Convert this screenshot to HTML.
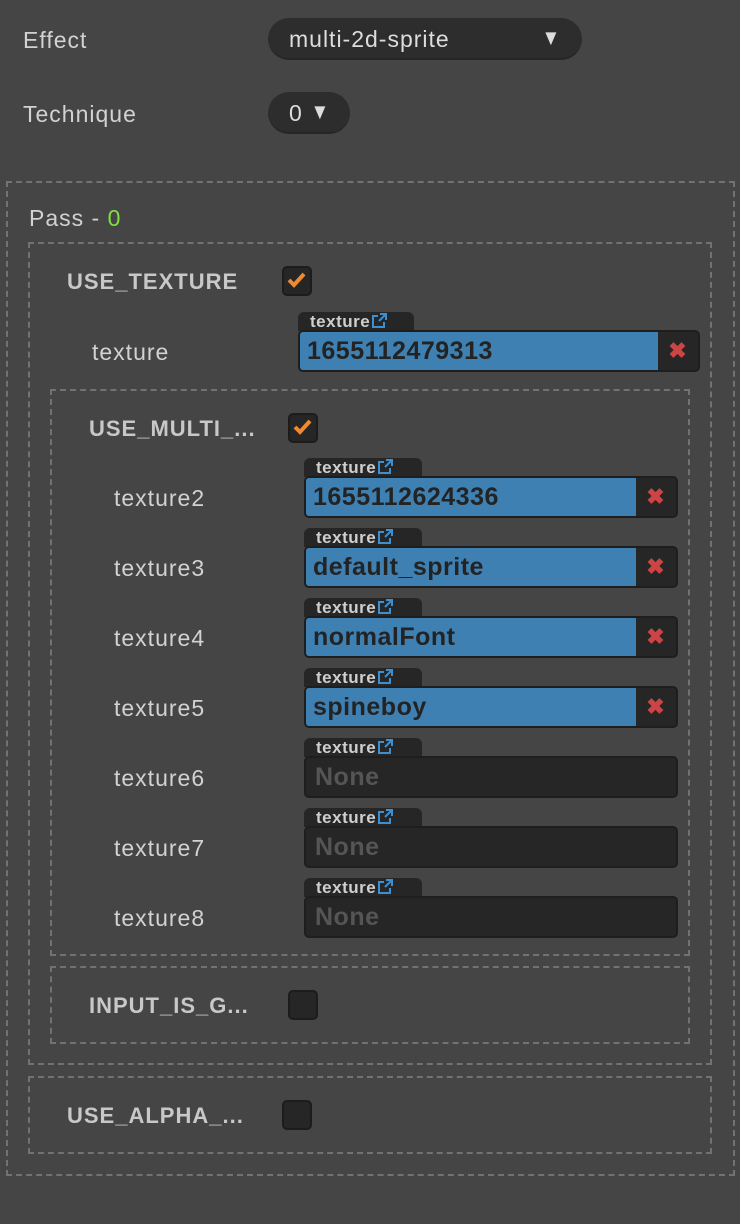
<!DOCTYPE html>
<html><head><style>
body{margin:0;width:740px;height:1224px;background:#454545;font-family:"Liberation Sans",sans-serif;color:#d2d2d2;position:relative;overflow:hidden}
.a{position:absolute}
.lbl{font-size:23px;line-height:26px;letter-spacing:1px}
.b{font-weight:bold;font-size:22px;letter-spacing:1px;color:#c8c8c8}
.sel{background:#2d2d2d;border-radius:21px;border-bottom:2px solid #262626;box-sizing:border-box}
.dash{border:2px dashed #727272;box-sizing:border-box}
.cb{width:30px;height:30px;background:#262626;border:2px solid #1c1c1c;border-radius:5px;box-sizing:border-box}
.tab{background:#262626;border-radius:6px 6px 0 0;height:19px;font-weight:bold;font-size:17px;letter-spacing:0.5px;color:#cfcfcf;padding-left:12px;box-sizing:border-box;line-height:19px}
.fld{background:#262626;border:2px solid #1e1e1e;border-radius:5px;box-sizing:border-box;height:42px;overflow:hidden}
.fld .v{position:absolute;left:0;top:0;bottom:0;background:#3f80b3;font-weight:bold;font-size:25px;letter-spacing:0.5px;color:#232323;padding-left:7px;line-height:38px;box-sizing:border-box}
.fld .x{position:absolute;right:0;top:0;width:41px;bottom:0;color:#c44;font-size:22px;text-align:center;line-height:38px;font-weight:bold}
.none{color:#555;font-weight:bold;font-size:25px;letter-spacing:0.5px;padding-left:9px;line-height:38px}
.arr{font-size:22px;color:#ddd;transform:scaleX(0.85)}
</style></head><body>
<div class="a lbl" style="left:23px;top:27px">Effect</div>
<div class="a sel" style="left:268px;top:18px;width:314px;height:42px"><span class="a lbl" style="left:21px;top:8px;color:#ddd">multi-2d-sprite</span><span class="a arr" style="left:272px;top:7px">▼</span></div>
<div class="a lbl" style="left:23px;top:101px">Technique</div>
<div class="a sel" style="left:268px;top:92px;width:82px;height:42px"><span class="a lbl" style="left:21px;top:8px;color:#ddd">0</span><span class="a arr" style="left:41px;top:7px">▼</span></div>

<div class="a dash" style="left:6px;top:181px;width:729px;height:995px"></div>
<div class="a lbl" style="left:29px;top:205px">Pass - <span style="color:#7fe040">0</span></div>
<div class="a dash" style="left:28px;top:242px;width:684px;height:823px"></div>
<div class="a b" style="left:67px;top:269px">USE_TEXTURE</div>
<div class="a cb" style="left:282px;top:266px"><svg width="26" height="26" class="a" style="left:0;top:0"><path d="M5 12l5 5 10-11" stroke="#f08a30" stroke-width="4" fill="none"/></svg></div>
<div class="a lbl" style="left:92px;top:339px">texture</div>
<div class="a tab" style="left:298px;top:312px;width:116px">texture <svg width="16" height="16" style="vertical-align:-2px;margin-left:-4px"><path d="M7 3H2v11h11V9M8 8l7-7M9 1h6v6" stroke="#3d8fd0" stroke-width="2" fill="none"/></svg></div>
<div class="a fld" style="left:298px;top:330px;width:402px"><div class="v" style="width:358px">1655112479313</div><div class="x">✖</div></div>

<div class="a dash" style="left:50px;top:389px;width:640px;height:567px"></div>
<div class="a b" style="left:89px;top:416px">USE_MULTI_...</div>
<div class="a cb" style="left:288px;top:413px"><svg width="26" height="26" class="a" style="left:0;top:0"><path d="M5 12l5 5 10-11" stroke="#f08a30" stroke-width="4" fill="none"/></svg></div>

<div class="a dash" style="left:50px;top:966px;width:640px;height:78px"></div>
<div class="a b" style="left:89px;top:993px">INPUT_IS_G...</div>
<div class="a cb" style="left:288px;top:990px"></div>
<div class="a dash" style="left:28px;top:1076px;width:684px;height:78px"></div>
<div class="a b" style="left:67px;top:1103px">USE_ALPHA_...</div>
<div class="a cb" style="left:282px;top:1100px"></div>

<div class="a lbl" style="left:114px;top:485px">texture2</div>
<div class="a tab" style="left:304px;top:458px;width:118px">texture <svg width="16" height="16" style="vertical-align:-2px;margin-left:-4px"><path d="M7 3H2v11h11V9M8 8l7-7M9 1h6v6" stroke="#3d8fd0" stroke-width="2" fill="none"/></svg></div>
<div class="a fld" style="left:304px;top:476px;width:374px"><div class="v" style="width:330px">1655112624336</div><div class="x">✖</div></div>

<div class="a lbl" style="left:114px;top:555px">texture3</div>
<div class="a tab" style="left:304px;top:528px;width:118px">texture <svg width="16" height="16" style="vertical-align:-2px;margin-left:-4px"><path d="M7 3H2v11h11V9M8 8l7-7M9 1h6v6" stroke="#3d8fd0" stroke-width="2" fill="none"/></svg></div>
<div class="a fld" style="left:304px;top:546px;width:374px"><div class="v" style="width:330px">default_sprite</div><div class="x">✖</div></div>

<div class="a lbl" style="left:114px;top:625px">texture4</div>
<div class="a tab" style="left:304px;top:598px;width:118px">texture <svg width="16" height="16" style="vertical-align:-2px;margin-left:-4px"><path d="M7 3H2v11h11V9M8 8l7-7M9 1h6v6" stroke="#3d8fd0" stroke-width="2" fill="none"/></svg></div>
<div class="a fld" style="left:304px;top:616px;width:374px"><div class="v" style="width:330px">normalFont</div><div class="x">✖</div></div>

<div class="a lbl" style="left:114px;top:695px">texture5</div>
<div class="a tab" style="left:304px;top:668px;width:118px">texture <svg width="16" height="16" style="vertical-align:-2px;margin-left:-4px"><path d="M7 3H2v11h11V9M8 8l7-7M9 1h6v6" stroke="#3d8fd0" stroke-width="2" fill="none"/></svg></div>
<div class="a fld" style="left:304px;top:686px;width:374px"><div class="v" style="width:330px">spineboy</div><div class="x">✖</div></div>

<div class="a lbl" style="left:114px;top:765px">texture6</div>
<div class="a tab" style="left:304px;top:738px;width:118px">texture <svg width="16" height="16" style="vertical-align:-2px;margin-left:-4px"><path d="M7 3H2v11h11V9M8 8l7-7M9 1h6v6" stroke="#3d8fd0" stroke-width="2" fill="none"/></svg></div>
<div class="a fld" style="left:304px;top:756px;width:374px"><div class="none">None</div></div>

<div class="a lbl" style="left:114px;top:835px">texture7</div>
<div class="a tab" style="left:304px;top:808px;width:118px">texture <svg width="16" height="16" style="vertical-align:-2px;margin-left:-4px"><path d="M7 3H2v11h11V9M8 8l7-7M9 1h6v6" stroke="#3d8fd0" stroke-width="2" fill="none"/></svg></div>
<div class="a fld" style="left:304px;top:826px;width:374px"><div class="none">None</div></div>

<div class="a lbl" style="left:114px;top:905px">texture8</div>
<div class="a tab" style="left:304px;top:878px;width:118px">texture <svg width="16" height="16" style="vertical-align:-2px;margin-left:-4px"><path d="M7 3H2v11h11V9M8 8l7-7M9 1h6v6" stroke="#3d8fd0" stroke-width="2" fill="none"/></svg></div>
<div class="a fld" style="left:304px;top:896px;width:374px"><div class="none">None</div></div>
</body></html>
